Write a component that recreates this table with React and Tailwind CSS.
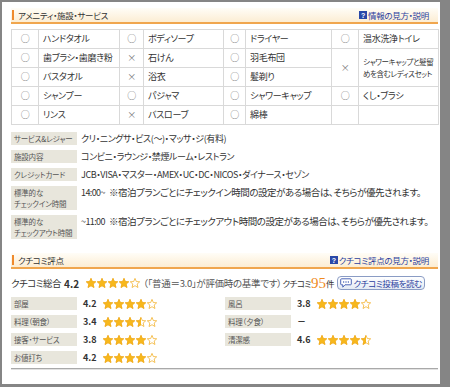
import React from "react";

const jp = "font-['Noto_Sans_CJK_JP',sans-serif] [font-feature-settings:'palt']";

// amenity rows: [mark, name] x 4, null = covered by rowspan
const amenities = [
  [["○", "ハンドタオル"], ["○", "ボディソープ"], ["○", "ドライヤー"], ["○", "温水洗浄トイレ"]],
  [["○", "歯ブラシ・歯磨き粉"], ["×", "石けん"], ["○", "羽毛布団"], "span"],
  [["○", "バスタオル"], ["×", "浴衣"], ["○", "髪剃り"], null],
  [["○", "シャンプー"], ["○", "パジャマ"], ["○", "シャワーキャップ"], ["○", "くし・ブラシ"]],
  [["○", "リンス"], ["×", "バスローブ"], ["○", "綿棒"], ["", ""]],
];

const markW = ["w-[27px]", "w-[24px]", "w-[22px]", "w-[27px]"];
const nameW = ["w-[81px]", "w-[80px]", "w-[86px]", "w-[80px]"];

const info = [
  { label: ["サービス&レジャー"], value: "クリ・ニングサ・ビス(～)・マッサ・ジ(有料)" },
  { label: ["施設内容"], value: "コンビニ・ラウンジ・禁煙ルーム・レストラン" },
  { label: ["クレジットカード"], value: "JCB・VISA・マスター・AMEX・UC・DC・NICOS・ダイナース・セゾン" },
  {
    label: ["標準的な", "チェックイン時間"],
    time: "14:00~",
    value: "※宿泊プランごとにチェックイン時間の設定がある場合は、そちらが優先されます。",
  },
  {
    label: ["標準的な", "チェックアウト時間"],
    time: "~11:00",
    value: "※宿泊プランごとにチェックアウト時間の設定がある場合は、そちらが優先されます。",
  },
];

const ratings = [
  ["部屋", "4.2", 4],
  ["風呂", "3.8", 4],
  ["料理（朝食）", "3.4", 3.5],
  ["料理（夕食）", "－", null],
  ["接客・サービス", "3.8", 4],
  ["清潔感", "4.6", 4.5],
  ["お値打ち", "4.2", 4],
  null,
];

const STAR = "5,0.4 6.35,3.55 9.7,3.8 7.15,6.05 7.95,9.5 5,7.7 2.05,9.5 2.85,6.05 0.3,3.8 3.65,3.55";

const Star = ({ fill }) => (
  <div className="relative w-[10px] h-[10px]">
    <svg className="absolute inset-0" width="10" height="10" viewBox="0 0 10 10">
      <polygon points={STAR} fill="none" stroke="#f2b230" strokeWidth="0.8" />
    </svg>
    {fill > 0 && (
      <div className="absolute left-0 top-0 h-[10px] overflow-hidden" style={{ width: fill * 10 }}>
        <svg width="10" height="10" viewBox="0 0 10 10">
          <polygon points={STAR} fill="#f7b81c" stroke="#eea515" strokeWidth="0.5" />
        </svg>
      </div>
    )}
  </div>
);

const Stars = ({ value }) => (
  <div className="flex gap-[1px]">
    {[0, 1, 2, 3, 4].map((i) => (
      <Star key={i} fill={Math.max(0, Math.min(1, value - i))} />
    ))}
  </div>
);

const HelpIcon = () => (
  <span className="inline-flex items-center justify-center w-[8px] h-[8px] bg-[#2a48a8] text-white text-[7px] leading-none font-bold mr-[1px] font-['Liberation_Sans',sans-serif]">
    ?
  </span>
);

const SectionHead = ({ title, link }) => (
  <div className="h-[16px] flex items-center justify-between border-b-2 border-[#f0a64e] bg-linear-to-b from-[#fffdf7] to-[#fcedd3]">
    <div className="flex items-center">
      <div className="ml-[1px] w-[2px] h-[10px] bg-[#ef8a2c]" />
      <span className="ml-[4px] text-[8.5px] tracking-[-0.3px] text-[#333]">{title}</span>
    </div>
    <div className="flex items-center mr-[9px] text-[8.5px] tracking-[-0.3px] text-[#2b3f9e]">
      <HelpIcon />
      {link}
    </div>
  </div>
);

const Bubble = () => (
  <svg width="12" height="10" viewBox="0 0 12 10" className="mr-[1px]">
    <path d="M1.5 0.8 H10.5 Q11.3 0.8 11.3 1.6 V6 Q11.3 6.8 10.5 6.8 H5 L2.8 9.2 V6.8 H1.5 Q0.7 6.8 0.7 6 V1.6 Q0.7 0.8 1.5 0.8 Z" fill="#fff" stroke="#3a56b0" strokeWidth="0.9" />
    <rect x="3" y="3.4" width="1.2" height="1.2" fill="#3a56b0" />
    <rect x="5.4" y="3.4" width="1.2" height="1.2" fill="#3a56b0" />
    <rect x="7.8" y="3.4" width="1.2" height="1.2" fill="#3a56b0" />
  </svg>
);

const App = () => {
  return (
    <div className={`w-[450px] h-[387px] bg-[#858585] pt-[2px] pl-[2px] overflow-hidden ${jp}`}>
      <div className="w-[438px] h-[382px] bg-white pl-[9px] pt-[6px]">
        <div className="w-[427px]">
          {/* amenity section */}
          <SectionHead title="アメニティ・施設・サービス" link="情報の見方・説明" />

          <table className="mt-[5px] w-[427px] border-collapse table-fixed text-[9px] tracking-[-0.3px] text-[#333]">
            <tbody>
              {amenities.map((row, r) => (
                <tr key={r} className="h-[19px]">
                  {row.map((cell, c) => {
                    if (cell === null) return null;
                    if (cell === "span") {
                      return (
                        <React.Fragment key={c}>
                          <td rowSpan={2} className={`${markW[c]} border border-[#d9d9d9] text-center text-[#777] p-0`}>
                            ×
                          </td>
                          <td
                            rowSpan={2}
                            className={`${nameW[c]} border border-[#d9d9d9] pl-[4px] p-0 text-[7.5px] leading-[12px] tracking-[-0.4px] whitespace-nowrap`}
                          >
                            シャワーキャップと髪留
                            <br />
                            めを含むレディスセット
                          </td>
                        </React.Fragment>
                      );
                    }
                    return (
                      <React.Fragment key={c}>
                        <td className={`${markW[c]} border border-[#d9d9d9] text-center text-[#777] p-0`}>{cell[0]}</td>
                        <td className={`${nameW[c]} border border-[#d9d9d9] pl-[4px] p-0 whitespace-nowrap`}>{cell[1]}</td>
                      </React.Fragment>
                    );
                  })}
                </tr>
              ))}
            </tbody>
          </table>

          {/* facility info */}
          <div className="mt-[7px] flex flex-col gap-[5px]">
            {info.map((row, i) => (
              <div key={i} className="flex items-start">
                <div className="w-[66px] shrink-0 bg-[#e8e6dc] px-[3px] py-[1px] text-[7.5px] leading-[11px] tracking-[-0.2px] text-[#555]">
                  {row.label.map((l, j) => (
                    <div key={j} className="whitespace-nowrap">
                      {l}
                    </div>
                  ))}
                </div>
                <div className="ml-[4px] flex items-center h-[13px] text-[#333] whitespace-nowrap">
                  {row.time && <span className="text-[9px] tracking-[-0.6px] mr-[4px]">{row.time}</span>}
                  <span className={row.time ? "text-[9.5px] tracking-[-0.45px]" : "text-[9px] tracking-[-0.4px]"}>
                    {row.value}
                  </span>
                </div>
              </div>
            ))}
          </div>

          {/* review scores */}
          <div className="mt-[14px]">
            <SectionHead title="クチコミ評点" link="クチコミ評点の見方・説明" />
          </div>

          <div className="mt-[6px] h-[16px] flex items-center text-[#333] whitespace-nowrap">
            <span className="text-[9.5px] tracking-[-0.5px]">クチコミ総合</span>
            <span className="ml-[3px] text-[10px] font-bold">4.2</span>
            <div className="ml-[7px]">
              <Stars value={4} />
            </div>
            <span className="ml-[3px] text-[9.5px] tracking-[-0.3px] text-[#555]">（「普通＝3.0」が評価時の基準です）</span>
            <span className="ml-[1px] text-[8.5px] tracking-[-0.5px]">クチコミ</span>
            <span className="text-[15px] leading-[15px] text-[#f08a1c] font-['Liberation_Serif',serif]">95</span>
            <span className="text-[8.5px]">件</span>
            <div className="ml-[3px] h-[14px] flex items-center px-[2px] rounded-[4px] border border-[#8a9cc4] bg-linear-to-b from-white to-[#e4eaf4] text-[8.5px] tracking-[-0.4px] text-[#2b3f9e]">
              <Bubble />
              クチコミ投稿を読む
            </div>
          </div>

          <div className="mt-[6px] grid grid-cols-[214px_213px] gap-y-[5px]">
            {ratings.map((r, i) =>
              r === null ? (
                <div key={i} />
              ) : (
                <div key={i} className="flex items-center h-[13px]">
                  <div className="w-[66px] h-[13px] bg-[#e8e6dc] pl-[3px] text-[7.5px] leading-[13px] tracking-[-0.2px] text-[#555] whitespace-nowrap">
                    {r[0]}
                  </div>
                  <div className="ml-[6px] w-[20px] text-[9px] font-bold text-[#333]">{r[1]}</div>
                  {r[2] !== null && <Stars value={r[2]} />}
                </div>
              )
            )}
          </div>

          <div className="mt-[4px] border-t border-[#a9a9a9] border-b border-b-[#e2e2e2]" />
        </div>
      </div>
    </div>
  );
};

export default App;
